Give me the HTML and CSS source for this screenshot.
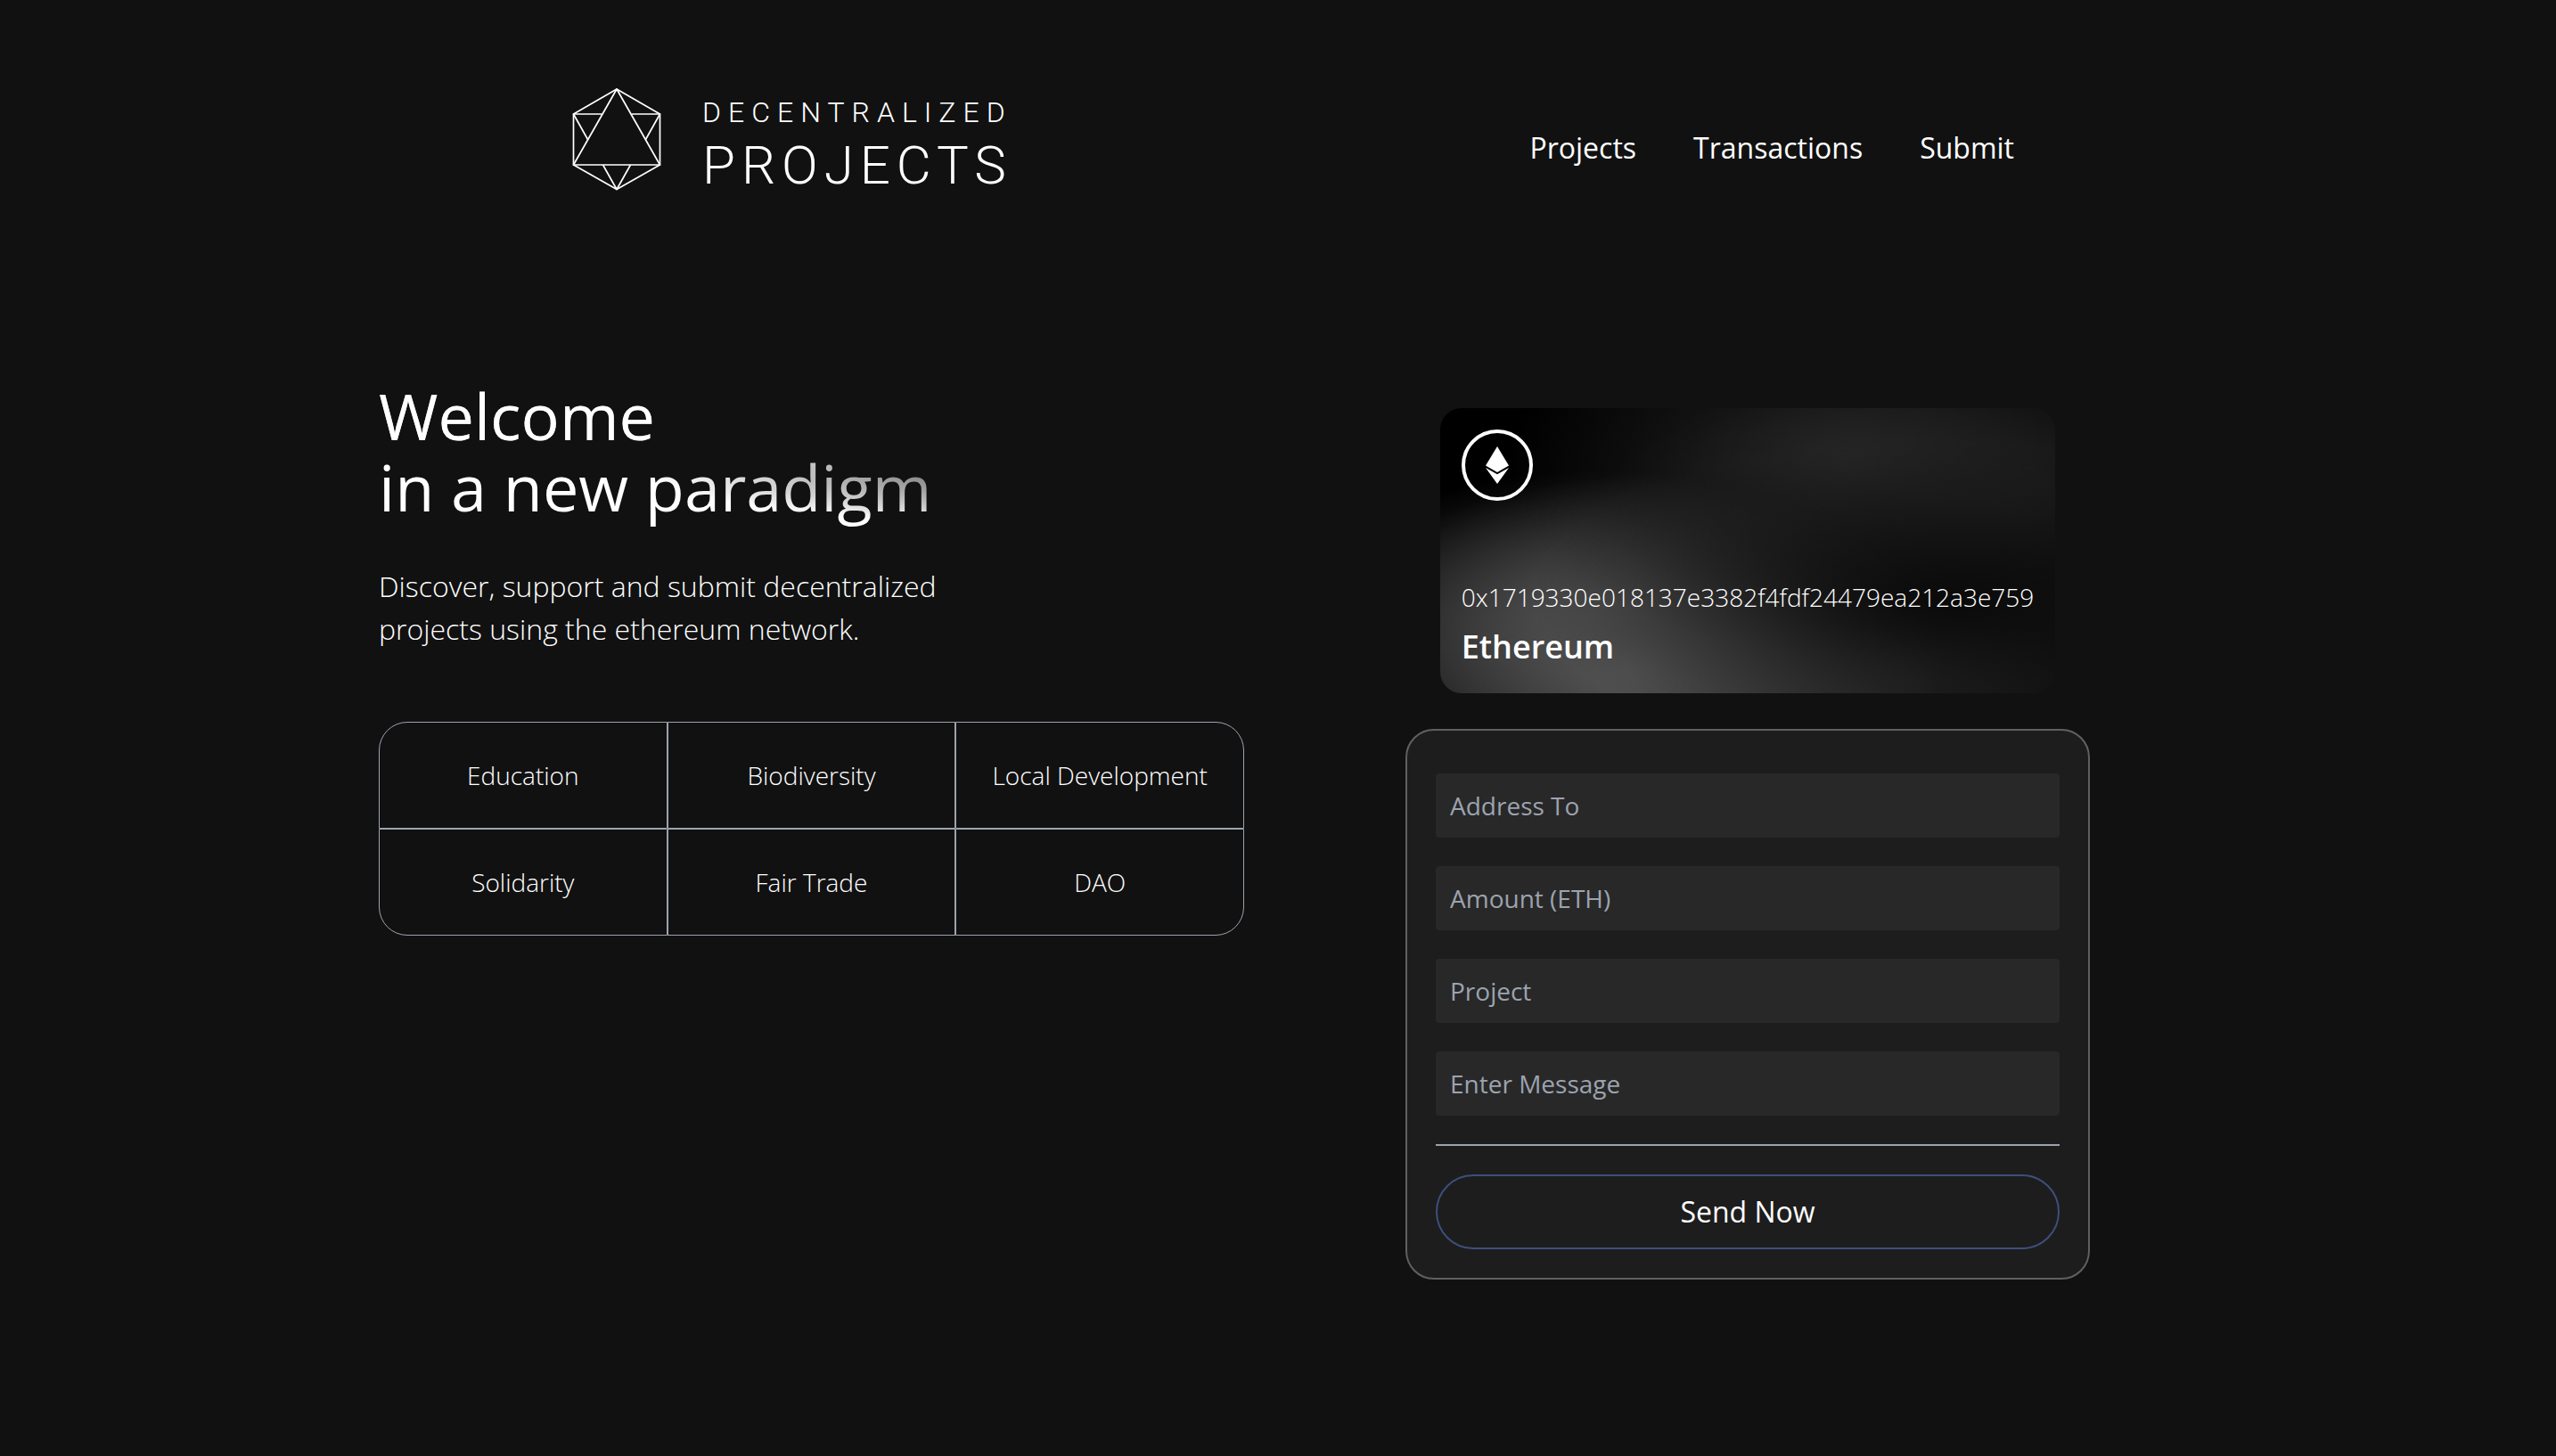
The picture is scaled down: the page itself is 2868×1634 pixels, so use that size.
FILE: index.html
```html
<!DOCTYPE html>
<html lang="en">
<head>
  <meta charset="utf-8">
  <meta name="viewport" content="width=device-width, initial-scale=1">
  <title>Decentralized Projects</title>
  <link rel="stylesheet" href="styles.css">
</head>
<body>
  <header class="site-header">
    <a class="logo" href="#" aria-label="Decentralized Projects">
      <svg class="logo-mark" viewBox="0 0 100 116" aria-hidden="true">
        <g fill="none" stroke="#fff" stroke-width="1.7" stroke-linejoin="round">
          <path d="M50 2 98.500 30V87L50 114.500 1.500 87V30Z"/>
          <path d="M50 2 98.500 87H1.500Z"/>
          <path d="M33.500 30H1.500L17.500 58.500"/>
          <path d="M66.500 30h32L82.500 58.500"/>
          <path d="M34.500 87 50 114.500 65.500 87"/>
        </g>
      </svg>
      <span class="wordmark">
        <span class="wordmark-top">DECENTRALIZED</span>
        <span class="wordmark-bottom">PROJECTS</span>
      </span>
    </a>
    <nav class="site-nav">
      <a href="#projects">Projects</a>
      <a href="#transactions">Transactions</a>
      <a href="#submit">Submit</a>
    </nav>
  </header>

  <main class="hero">
    <section class="intro">
      <h1 class="title">Welcome<br>in a new paradigm</h1>
      <p class="lead">Discover, support and submit decentralized projects using the ethereum network.</p>
      <ul class="topics">
        <li>Education</li>
        <li>Biodiversity</li>
        <li>Local Development</li>
        <li>Solidarity</li>
        <li>Fair Trade</li>
        <li>DAO</li>
      </ul>
    </section>

    <section class="transfer">
      <div class="eth-card">
        <div class="eth-badge">
          <svg viewBox="0 0 26 42" aria-hidden="true">
            <path fill="#fff" d="M13 0 26 21.500 13 29 0 21.500Z"/>
            <path fill="#fff" d="M0 24 13 31.300 26 24 13 42Z"/>
          </svg>
        </div>
        <div>
          <p class="eth-address">0x1719330e018137e3382f4fdf24479ea212a3e759</p>
          <p class="eth-name">Ethereum</p>
        </div>
      </div>

      <form class="send-form">
        <input type="text" name="addressTo" placeholder="Address To" aria-label="Address To">
        <input type="text" name="amount" placeholder="Amount (ETH)" aria-label="Amount (ETH)">
        <input type="text" name="project" placeholder="Project" aria-label="Project">
        <input type="text" name="message" placeholder="Enter Message" aria-label="Enter Message">
        <hr>
        <button type="button">Send Now</button>
      </form>
    </section>
  </main>
</body>
</html>
```

FILE: styles.css
```css
* {
  box-sizing: border-box;
}

body {
  margin: 0;
  background: #111;
  color: #fff;
  font-family: "Open Sans", "Noto Sans", sans-serif;
  font-size: 28px;
  line-height: 40px;
}

h1,
p,
ul {
  margin: 0;
  padding: 0;
}

a {
  color: inherit;
  text-decoration: none;
}

.site-header {
  display: flex;
  align-items: flex-start;
  justify-content: space-between;
  max-width: 1652px;
  margin: 0 auto;
  padding: 98px 0 0 34px;
}

.logo {
  display: flex;
  align-items: flex-start;
  gap: 46px;
}

.logo-mark {
  width: 100px;
  height: 116px;
}

.wordmark {
  display: flex;
  flex-direction: column;
  gap: 8px;
  padding-top: 12px;
  font-family: Roboto, sans-serif;
  font-weight: 300;
}

.wordmark-top {
  font-size: 32px;
  line-height: 32px;
  letter-spacing: 8px;
}

.wordmark-bottom {
  font-size: 60px;
  line-height: 72px;
  letter-spacing: 7px;
}

.site-nav {
  display: flex;
  gap: 64px;
  padding-top: 44px;
  font-size: 32px;
  line-height: 48px;
}

.hero {
  display: flex;
  align-items: flex-start;
  justify-content: space-between;
  gap: 64px;
  max-width: 2018px;
  margin: 0 auto;
  padding: 196px 98px 96px 0;
}

.intro {
  flex: 0 1 971px;
}

.title {
  padding: 8px 0;
  background-color: #fff;
  background-image:
    radial-gradient(at 4% 36%, #fff 0, transparent 53%),
    radial-gradient(at 100% 60%, #000 0, transparent 50%);
  background-clip: text;
  -webkit-background-clip: text;
  color: transparent;
  font-size: 72px;
  font-weight: 400;
  line-height: 80px;
}

.lead {
  max-width: 728px;
  margin-top: 40px;
  font-size: 32px;
  font-weight: 300;
  line-height: 48px;
}

.topics {
  display: grid;
  grid-template-columns: repeat(3, 1fr);
  margin-top: 80px;
  list-style: none;
  font-weight: 300;
}

.topics li {
  display: flex;
  align-items: center;
  justify-content: center;
  min-height: 120px;
  border: 1px solid #9ca3af;
}

.topics li:nth-child(1) {
  border-top-left-radius: 32px;
}

.topics li:nth-child(3) {
  border-top-right-radius: 32px;
}

.topics li:nth-child(4) {
  border-bottom-left-radius: 32px;
}

.topics li:nth-child(6) {
  border-bottom-right-radius: 32px;
}

.transfer {
  display: flex;
  flex: 0 1 768px;
  flex-direction: column;
  align-items: center;
  gap: 40px;
  padding-top: 40px;
}

.eth-card {
  display: flex;
  flex-direction: column;
  justify-content: space-between;
  min-height: 320px;
  padding: 24px;
  border-radius: 24px;
  background-color: #000;
  background-image:
    radial-gradient(at 83% 67%, #0a0a0a 0, transparent 58%),
    radial-gradient(at 67% 20%, #262626 0, transparent 59%),
    radial-gradient(at 88% 35%, #1f1f1f 0, transparent 50%),
    radial-gradient(at 31% 91%, #555 0, transparent 52%),
    radial-gradient(at 27% 71%, #444 0, transparent 49%),
    radial-gradient(at 74% 89%, #303030 0, transparent 51%),
    radial-gradient(at 53% 75%, #222 0, transparent 45%);
}

.eth-badge {
  display: flex;
  align-items: center;
  justify-content: center;
  width: 80px;
  height: 80px;
  border: 4px solid #fff;
  border-radius: 50%;
}

.eth-badge svg {
  width: 26px;
  height: 42px;
}

.eth-address {
  font-weight: 300;
}

.eth-name {
  margin-top: 8px;
  font-size: 36px;
  font-weight: 600;
  line-height: 56px;
}

.send-form {
  display: flex;
  flex-direction: column;
  gap: 32px;
  width: 100%;
  padding: 48px 32px 32px;
  border: 2px solid #606060;
  border-radius: 32px;
  background: #1d1d1d;
}

.send-form input {
  width: 100%;
  height: 72px;
  padding: 16px;
  border: 0;
  border-radius: 4px;
  background: #282828;
  color: #fff;
  font: inherit;
}

.send-form input::placeholder {
  color: #9ca3af;
  opacity: 1;
}

.send-form hr {
  width: 100%;
  height: 2px;
  margin: 0;
  border: 0;
  background: #9ca3af;
}

.send-form button {
  padding: 16px;
  border: 2px solid #3d4f7c;
  border-radius: 42px;
  background: transparent;
  color: #fff;
  font: inherit;
  font-size: 32px;
  line-height: 48px;
}
```
